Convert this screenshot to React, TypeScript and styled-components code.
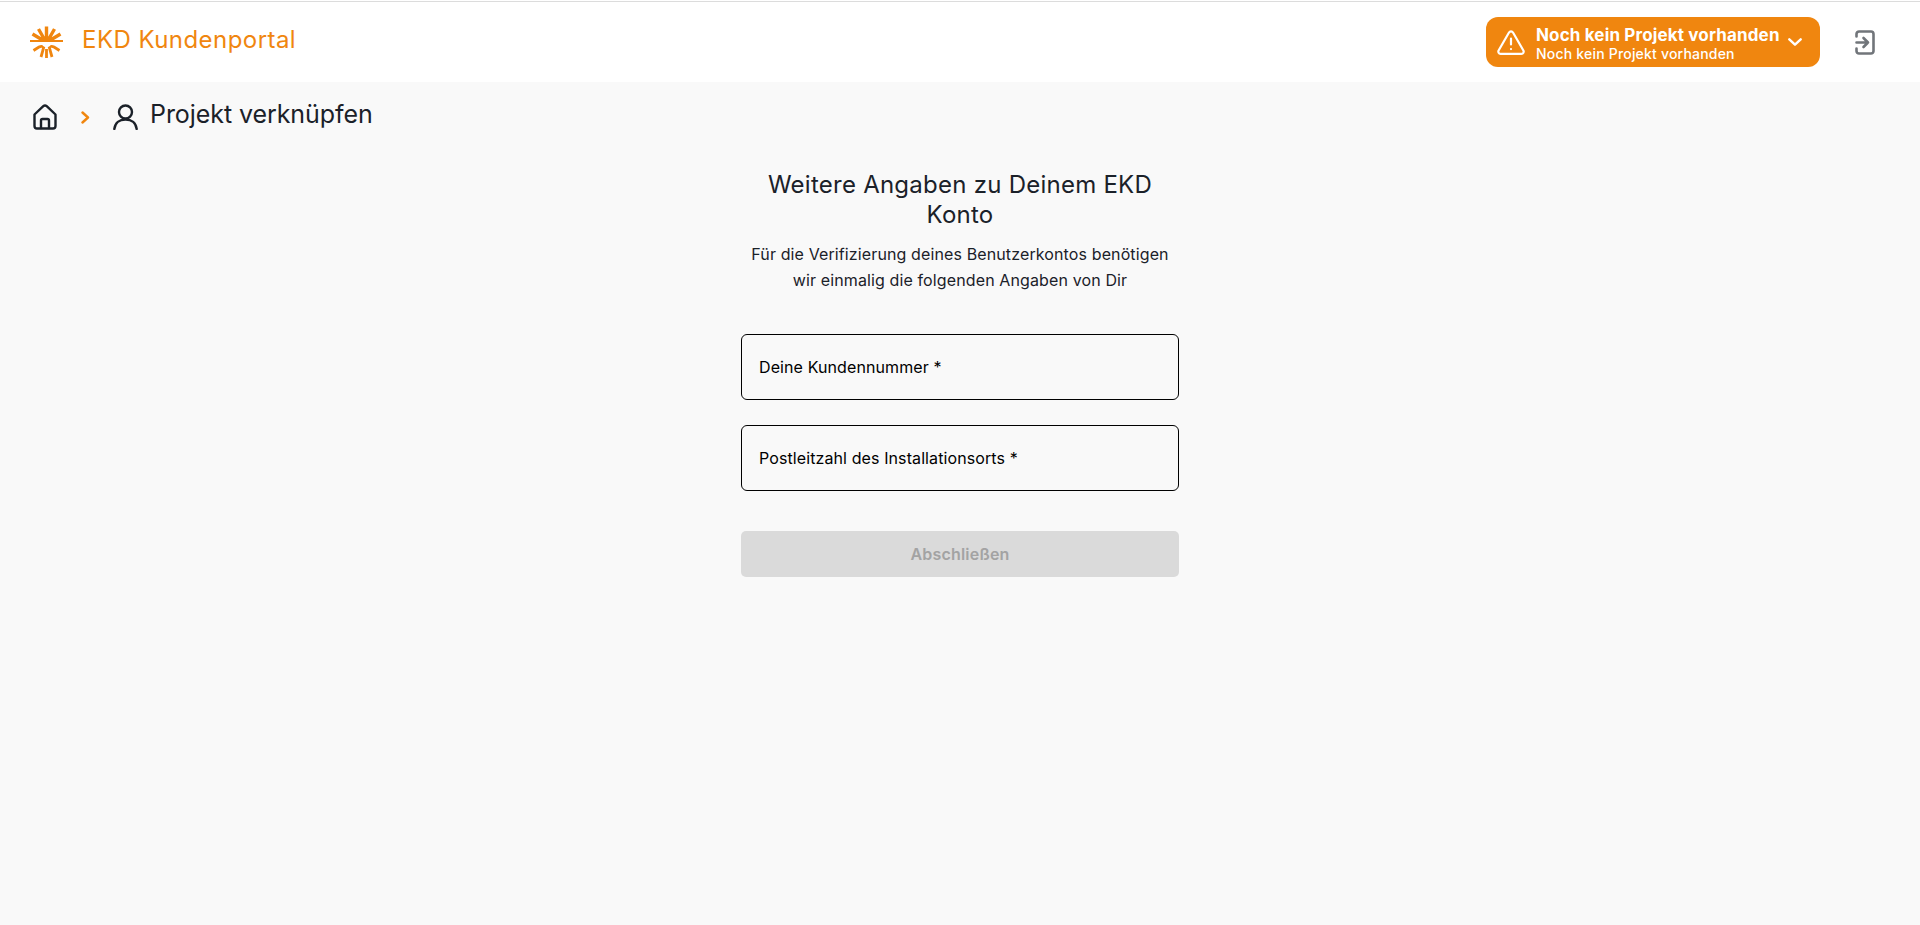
import React from 'react';
import styled, { createGlobalStyle } from 'styled-components';

const GlobalStyle = createGlobalStyle`
	html, body {
		margin: 0;
		padding: 0;
		height: 100%;
		background-color: #f9f9f9;
		font-family: 'Inter', 'Liberation Sans', sans-serif;
	}
	#root {
		height: 100%;
	}
`;

const Page = styled.div`
	min-height: 925px;
	box-sizing: border-box;
	padding-top: 1px;
	display: flex;
	flex-direction: column;
	background-color: #fff;
`;

const Header = styled.header`
	height: 81px;
	flex: none;
	box-sizing: border-box;
	border-top: 1px solid #dcdcdc;
	background-color: #fff;
	display: flex;
	align-items: center;
	justify-content: space-between;
	padding: 0 45px 0 30px;
`;

const Content = styled.div`
	flex: 1;
	background-color: #f9f9f9;
`;

const Brand = styled.div`
	display: flex;
	align-items: center;
	gap: 19px;
	color: #f0860f;
	font-size: 24px;
	letter-spacing: 0.45px;
`;

const BrandName = styled.span`
	margin-bottom: 6px;
`;

const HeaderActions = styled.div`
	display: flex;
	align-items: center;
	gap: 35px;
`;

const ProjectBadge = styled.button`
	width: 334px;
	height: 50px;
	border: none;
	border-radius: 12px;
	background-color: #f0860f;
	color: #fff;
	display: flex;
	align-items: center;
	padding: 0 18px 0 11px;
	font-family: inherit;
	text-align: left;
`;

const BadgeText = styled.div`
	flex: 1;
	min-width: 0;
	display: flex;
	flex-direction: column;
	padding: 4px 0 0 11px;
	white-space: nowrap;
`;

const BadgeTitle = styled.span`
	font-size: 17px;
	font-weight: 700;
	line-height: 19px;
	letter-spacing: 0.15px;
`;

const BadgeSubtitle = styled.span`
	font-size: 14px;
	line-height: 18px;
	font-weight: 500;
	letter-spacing: 0.2px;
`;

const Breadcrumb = styled.nav`
	display: flex;
	align-items: center;
	padding: 22px 0 0 33px;
	color: #1b2129;
	font-size: 25px;
	line-height: 30px;
	letter-spacing: -0.07px;
`;

const Separator = styled.span`
	display: flex;
	margin: 0 23px 0 24px;
`;

const CrumbLabel = styled.span`
	margin-left: 12px;
	margin-top: -6px;
`;

const Main = styled.main`
	display: flex;
	justify-content: center;
	padding-top: 40px;
`;

const Form = styled.form`
	width: 438px;
	display: flex;
	flex-direction: column;
`;

const Title = styled.h1`
	margin: 0 20px;
	color: #1b2129;
	font-size: 24px;
	line-height: 30px;
	font-weight: 400;
	letter-spacing: 0.25px;
	text-align: center;
`;

const Lead = styled.p`
	margin: 11px 0 0;
	color: #1b2129;
	font-size: 16px;
	line-height: 26px;
	letter-spacing: 0.12px;
	text-align: center;
`;

const Field = styled.label<{ $first?: boolean }>`
	height: 66px;
	box-sizing: border-box;
	border: 1px solid #000;
	border-radius: 6px;
	display: flex;
	align-items: center;
	padding: 0 17px;
	margin-top: ${(props) => (props.$first ? '41px' : '25px')};
	color: #000;
	font-size: 16px;
	letter-spacing: 0.1px;
`;

const SubmitButton = styled.button`
	height: 46px;
	margin-top: 40px;
	border: none;
	border-radius: 5px;
	background-color: #dadada;
	color: #a3a3a3;
	font-family: inherit;
	font-size: 16px;
	font-weight: 600;
	letter-spacing: 0.2px;
`;

const Logo = () => (
	<svg width="33" height="33" viewBox="0 0 33 33" fill="none" stroke="#f0860f">
		<path d="M0 15H33" strokeWidth="2" />
		<path d="M16.5 14V0.5M14.5 13.5L8.5 3M18.5 13.5L24.5 3M12.5 14L2.5 8M20.5 14L30.5 8" strokeWidth="3.4" />
		<path d="M11 14H22L16.5 9Z" fill="#f0860f" strokeWidth="0" />
		<path d="M3.5 24.5L9 21Q11 20 12.5 20.5M11 31L13 24Q13.5 21.5 14 20.5M16.5 32V23M29.5 24.5L24 21Q22 20 20.5 20.5M22 31L20 24Q19.5 21.5 19 20.5" strokeWidth="2.8" />
	</svg>
);

const WarningIcon = () => (
	<svg width="28" height="25" viewBox="0 0 28 25" fill="none" stroke="#fff" strokeWidth="2.2" strokeLinecap="round" strokeLinejoin="round">
		<path d="M12 2.5L1.6 20.5C.8 22 1.8 23.8 3.5 23.8H24.5C26.2 23.8 27.2 22 26.4 20.5L16 2.5C15.1 1 12.9 1 12 2.5Z" />
		<path d="M14 8.5V14.5M14 19V19.1" />
	</svg>
);

const ChevronDown = () => (
	<svg width="14" height="8" viewBox="0 0 14 8" fill="none" stroke="#fff" strokeWidth="2.4" strokeLinecap="round" strokeLinejoin="round">
		<path d="M1.3 1.3L7 6.7L12.7 1.3" />
	</svg>
);

const ExitIcon = () => (
	<svg width="20" height="25" viewBox="0 0 20 25" fill="none" stroke="#71757a" strokeWidth="2.6" strokeLinecap="round" strokeLinejoin="round">
		<path d="M1.5 6.5V4A2.5 2.5 0 0 1 4 1.500H16A2.5 2.5 0 0 1 18.5 4V21A2.5 2.5 0 0 1 16 23.5H4A2.5 2.5 0 0 1 1.5 21V18.5" />
		<path d="M1.5 12.5H13M8.5 8L13 12.5L8.5 17" />
	</svg>
);

const HomeIcon = () => (
	<svg width="24" height="26" viewBox="0 0 24 26" fill="none" stroke="#1b2129" strokeWidth="2.4" strokeLinecap="round" strokeLinejoin="round">
		<path d="M1.5 10.5L10.3 2.2C11.3 1.3 12.7 1.3 13.7 2.2L22.5 10.5V22A2.5 2.5 0 0 1 20 24.5H4A2.5 2.5 0 0 1 1.5 22Z" />
		<path d="M8 24V16.5A1.5 1.5 0 0 1 9.5 15H14.5A1.5 1.5 0 0 1 16 16.5V24" />
	</svg>
);

const ChevronRight = () => (
	<svg width="9" height="13" viewBox="0 0 9 13" fill="none" stroke="#f0860f" strokeWidth="2.4" strokeLinecap="round" strokeLinejoin="round">
		<path d="M1.5 1.5L7 6.5L1.5 11.5" />
	</svg>
);

const UserIcon = () => (
	<svg width="25" height="26" viewBox="0 0 25 26" fill="none" stroke="#1b2129" strokeWidth="2.4" strokeLinecap="round" strokeLinejoin="round">
		<circle cx="12.5" cy="8" r="6.5" />
		<path d="M1.3 25C2 19 6.5 15.5 12.5 15.5C18.5 15.5 23 19 23.7 25" />
	</svg>
);

export default function App() {
	return (
		<Page>
			<GlobalStyle />
			<Header>
				<Brand>
					<Logo />
					<BrandName>EKD Kundenportal</BrandName>
				</Brand>
				<HeaderActions>
					<ProjectBadge type="button">
						<WarningIcon />
						<BadgeText>
							<BadgeTitle>Noch kein Projekt vorhanden</BadgeTitle>
							<BadgeSubtitle>Noch kein Projekt vorhanden</BadgeSubtitle>
						</BadgeText>
						<ChevronDown />
					</ProjectBadge>
					<ExitIcon />
				</HeaderActions>
			</Header>
			<Content>
				<Breadcrumb>
					<HomeIcon />
					<Separator>
						<ChevronRight />
					</Separator>
					<UserIcon />
					<CrumbLabel>Projekt verknüpfen</CrumbLabel>
				</Breadcrumb>
				<Main>
					<Form>
						<Title>Weitere Angaben zu Deinem EKD Konto</Title>
						<Lead>
							Für die Verifizierung deines Benutzerkontos benötigen
							<br />
							wir einmalig die folgenden Angaben von Dir
						</Lead>
						<Field $first>Deine Kundennummer *</Field>
						<Field>Postleitzahl des Installationsorts *</Field>
						<SubmitButton type="button" disabled>
							Abschließen
						</SubmitButton>
					</Form>
				</Main>
			</Content>
		</Page>
	);
}
